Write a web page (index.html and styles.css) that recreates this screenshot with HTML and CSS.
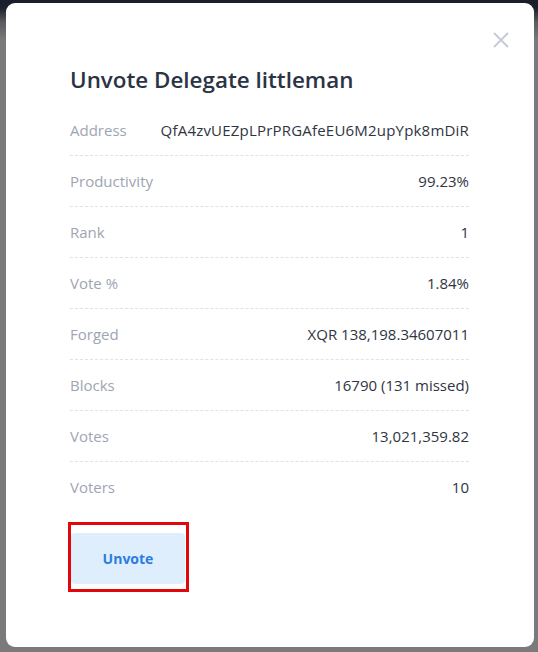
FILE: index.html
```html
<!DOCTYPE html>
<html lang="en">
<head>
<meta charset="utf-8">
<title>Unvote Delegate</title>
<link rel="stylesheet" href="styles.css">
</head>
<body>
<div class="overlay">
  <div class="modal">
    <button class="close" aria-label="Close">
      <svg width="16" height="16" viewBox="0 0 16 16"><path d="M1 1L15 15M15 1L1 15" stroke="#c3cad4" stroke-width="1.8" fill="none"/></svg>
    </button>
    <h1 class="title">Unvote Delegate littleman</h1>
    <dl class="details">
      <div class="row"><dt>Address</dt><dd class="mono-ish">QfA4zvUEZpLPrPRGAfeEU6M2upYpk8mDiR</dd></div>
      <div class="row"><dt>Productivity</dt><dd>99.23%</dd></div>
      <div class="row"><dt>Rank</dt><dd>1</dd></div>
      <div class="row"><dt>Vote %</dt><dd>1.84%</dd></div>
      <div class="row"><dt>Forged</dt><dd>XQR 138,198.34607011</dd></div>
      <div class="row"><dt>Blocks</dt><dd>16790 (131 missed)</dd></div>
      <div class="row"><dt>Votes</dt><dd>13,021,359.82</dd></div>
      <div class="row"><dt>Voters</dt><dd>10</dd></div>
    </dl>
    <div class="actions">
      <div class="highlight">
        <button class="btn">Unvote</button>
      </div>
    </div>
  </div>
</div>
</body>
</html>
```
FILE: styles.css
```css
* { box-sizing: border-box; }
html, body { margin: 0; padding: 0; }
body {
  width: 538px;
  height: 652px;
  overflow: hidden;
  font-family: "Open Sans", "Liberation Sans", sans-serif;
  background: linear-gradient(to bottom, #1a1d2b 0px, #1c1f2c 8px, #5a5b60 22px, #7a7a7a 40px, #7a7a7a 100%);
}
.overlay {
  padding: 3px 4px 5px 6px;
}
.modal {
  position: relative;
  background: #fff;
  border-radius: 9px;
  height: 644px;
  padding: 61px 65px 0 64px;
}
.close {
  position: absolute;
  top: 29px;
  right: 25px;
  width: 16px;
  height: 16px;
  padding: 0;
  border: 0;
  background: none;
  display: flex;
}
.title {
  margin: 0 0 9px;
  font-size: 22.4px;
  line-height: 32px;
  font-weight: 600;
  color: #2b3344;
}
.details {
  margin: 0;
  display: flex;
  flex-direction: column;
}
.row {
  display: flex;
  justify-content: space-between;
  align-items: center;
  height: 51px;
  border-bottom: 1px dashed #dfe2e7;
  font-size: 15px;
}
.row:last-child {
  border-bottom: 0;
  height: 50px;
}
.row dt {
  color: #9ea5b2;
}
.row dd {
  margin: 0;
  color: #2f3542;
}
.row dd.mono-ish {
  letter-spacing: 0.2px;
}
.actions {
  margin-top: 10px;
  margin-left: -2px;
  display: flex;
}
.highlight {
  border: 3px solid #e0080c;
  padding: 8px 1px 5px 0;
}
.btn {
  width: 114px;
  height: 51px;
  border: 0;
  border-radius: 4px;
  background: #dfeefc;
  color: #2a7de1;
  font-family: "Open Sans", "Liberation Sans", sans-serif;
  font-size: 14px;
  font-weight: 700;
}
```
